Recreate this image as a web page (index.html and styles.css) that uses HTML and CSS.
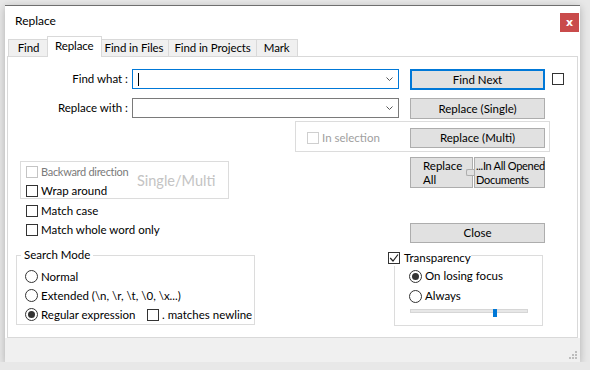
FILE: index.html
```html
<!DOCTYPE html>
<html lang="en">
<head>
    <meta charset="UTF-8">
    <meta name="viewport" content="width=device-width, initial-scale=1.0">
    <title>Replace</title>
    <link rel="stylesheet" href="styles.css">
</head>
<body>
<div class="window">
    <div class="titlebar">
        <span class="title">Replace</span>
        <button class="close-button">x</button>
    </div>

    <div class="tabs">
        <div class="tab">Find</div>
        <div class="tab active">Replace</div>
        <div class="tab">Find in Files</div>
        <div class="tab">Find in Projects</div>
        <div class="tab">Mark</div>
    </div>

    <div class="panel">
        <div class="field-row">
            <label class="field-label">Find what :</label>
            <div class="combo focused">
                <span class="caret"></span>
                <svg class="chevron" width="7" height="4" viewBox="0 0 7 4"><path d="M0.5 0.5 L3.5 3.5 L6.5 0.5" fill="none" stroke="#555" stroke-width="1"/></svg>
            </div>
            <button class="btn default">Find Next</button>
            <span class="box side-box"></span>
        </div>
        <div class="field-row">
            <label class="field-label">Replace with :</label>
            <div class="combo">
                <svg class="chevron" width="7" height="4" viewBox="0 0 7 4"><path d="M0.5 0.5 L3.5 3.5 L6.5 0.5" fill="none" stroke="#555" stroke-width="1"/></svg>
            </div>
            <button class="btn">Replace (Single)</button>
        </div>

        <div class="selection-group">
            <label class="opt disabled"><span class="box"></span>In selection</label>
            <button class="btn">Replace (Multi)</button>
        </div>

        <div class="lower">
            <div class="left-col">
                <div class="direction-group">
                    <div class="direction-opts">
                        <label class="opt dim"><span class="box"></span>Backward direction</label>
                        <label class="opt"><span class="box"></span>Wrap around</label>
                    </div>
                    <span class="mode-hint">Single/Multi</span>
                </div>
                <label class="opt match first"><span class="box"></span>Match case</label>
                <label class="opt match"><span class="box"></span>Match whole word only</label>

                <fieldset class="group search-mode">
                    <legend>Search Mode</legend>
                    <label class="opt"><span class="radio"></span>Normal</label>
                    <label class="opt"><span class="radio"></span>Extended (\n, \r, \t, \0, \x...)</label>
                    <div class="regex-row">
                        <label class="opt regex"><span class="radio checked"></span>Regular expression</label>
                        <label class="opt"><span class="box"></span>. matches newline</label>
                    </div>
                </fieldset>
            </div>

            <div class="right-col">
                <div class="replace-all">
                    <button class="btn multi">Replace<br>All</button>
                    <span class="link"></span>
                    <button class="btn multi wide">...In All Opened<br>Documents</button>
                </div>
                <button class="btn close-btn">Close</button>

                <fieldset class="group transparency">
                    <legend>
                        <span class="legend-inner">
                            <span class="box">
                                <svg width="10" height="10" viewBox="0 0 10 10"><path d="M1.2 5 L4 8 L9 1.5" fill="none" stroke="#222" stroke-width="1.2"/></svg>
                            </span>Transparency
                        </span>
                    </legend>
                    <label class="opt"><span class="radio checked"></span>On losing focus</label>
                    <label class="opt"><span class="radio"></span>Always</label>
                    <div class="slider">
                        <div class="track"></div>
                        <span class="thumb" style="left: 70%"></span>
                    </div>
                </fieldset>
            </div>
        </div>
    </div>

    <div class="footer">
        <svg width="9" height="8" viewBox="0 0 9 8">
            <rect x="6" y="0" width="2" height="2" fill="#bdbdbd"/>
            <rect x="3" y="3" width="2" height="2" fill="#bdbdbd"/>
            <rect x="6" y="3" width="2" height="2" fill="#bdbdbd"/>
            <rect x="0" y="6" width="2" height="2" fill="#bdbdbd"/>
            <rect x="3" y="6" width="2" height="2" fill="#bdbdbd"/>
            <rect x="6" y="6" width="2" height="2" fill="#bdbdbd"/>
        </svg>
    </div>
</div>
</body>
</html>
```

FILE: styles.css
```css
* {
    box-sizing: border-box;
}

body {
    margin: 0;
    background-color: #e8e8e8;
    font-family: "Segoe UI", Lato, "Noto Sans", sans-serif;
    font-size: 11.5px;
    line-height: 16px;
    color: #000;
}

.window {
    display: flex;
    flex-direction: column;
    width: 575px;
    height: 357px;
    margin: 5px 0 0 5px;
    background-color: #fff;
    border-top: 1px solid #6f6f6f;
    box-shadow: 0 2px 8px rgba(0, 0, 0, 0.25);
}

.titlebar {
    display: flex;
    align-items: flex-start;
    height: 30px;
    padding: 7px 1px 0 10px;
}

.title {
    font-size: 12px;
}

.close-button {
    margin-left: auto;
    width: 19px;
    height: 19px;
    padding: 0;
    border: none;
    background-color: #c94b4b;
    color: #fff;
    font: bold 11px/18px "DejaVu Sans", sans-serif;
}

.tabs {
    display: flex;
    align-items: flex-end;
    height: 20px;
    padding-left: 3px;
}

.tab {
    min-width: 41px;
    height: 17px;
    padding: 0 5px;
    border: 1px solid #d9d9d9;
    border-bottom: none;
    background-color: #f0f0f0;
    line-height: 15px;
    text-align: center;
    letter-spacing: -0.1px;
}

.tab + .tab {
    border-left: none;
}

.tab.active {
    position: relative;
    z-index: 1;
    height: 21px;
    margin: 0 -2px -1px;
    padding: 0 7px;
    border-left: 1px solid #d9d9d9;
    background-color: #fff;
    line-height: 18px;
}

.panel {
    height: 282px;
    margin: 0 2px;
    padding-top: 12px;
    border: 1px solid #d9d9d9;
    background-color: #fff;
}

.field-row {
    display: flex;
    align-items: flex-start;
}

.field-row + .field-row {
    margin-top: 8px;
}

.field-label {
    width: 120px;
    padding-top: 2px;
    text-align: right;
}

.combo {
    display: flex;
    align-items: center;
    width: 267px;
    height: 20px;
    margin-left: 4px;
    padding: 0 5px;
    border: 1px solid #7a7a7a;
    background-color: #fff;
}

.combo.focused {
    border-color: #0078d7;
}

.caret {
    width: 1px;
    height: 13px;
    background-color: #000;
}

.chevron {
    margin-left: auto;
}

.btn {
    height: 21px;
    padding: 0;
    border: 1px solid #adadad;
    background-color: #e1e1e1;
    font: inherit;
    color: #000;
    white-space: nowrap;
}

.field-row .btn {
    width: 135px;
    margin-left: 11px;
}

.btn.default {
    border-color: #0078d7;
    box-shadow: inset 0 0 0 1px #0078d7;
}

.side-box {
    width: 13px;
    height: 13px;
    margin: 4px 0 0 7px;
}

.selection-group {
    display: flex;
    align-items: center;
    width: 255px;
    height: 31px;
    margin: 2px 0 0 287px;
    padding: 3px 4px 0 11px;
    border: 1px solid #dcdcdc;
}

.selection-group .btn {
    width: 135px;
    height: 20px;
    margin-left: auto;
}

.opt {
    display: flex;
    align-items: center;
    height: 19px;
    white-space: nowrap;
}

.box {
    display: flex;
    align-items: center;
    justify-content: center;
    flex-shrink: 0;
    width: 12px;
    height: 12px;
    margin-right: 3px;
    border: 1px solid #333;
    background-color: #fff;
}

.radio {
    display: flex;
    align-items: center;
    justify-content: center;
    flex-shrink: 0;
    width: 13px;
    height: 13px;
    margin-right: 3px;
    border: 1px solid #333;
    border-radius: 50%;
    background-color: #fff;
}

.radio.checked::after {
    content: "";
    width: 7px;
    height: 7px;
    border-radius: 50%;
    background-color: #333;
}

.opt.disabled {
    color: #a0a0a0;
}

.opt.disabled .box {
    border-color: #cfcfcf;
}

.opt.dim {
    color: #7a7a7a;
    font-size: 11px;
    letter-spacing: -0.3px;
}

.opt.dim .box {
    border-color: #c4c4c4;
}

.lower {
    display: flex;
}

.left-col {
    width: 239px;
    margin-left: 8px;
}

.right-col {
    width: 157px;
    margin-left: 133px;
}

.direction-group {
    display: flex;
    width: 209px;
    height: 38px;
    margin: 9px 0 0 4px;
    padding-left: 5px;
    border: 1px solid #dcdcdc;
}

.direction-opts {
    width: 111px;
}

.mode-hint {
    align-self: center;
    padding-top: 2px;
    color: #c4c4c4;
    font-size: 14.5px;
    line-height: 20px;
}

.match {
    margin-left: 10px;
}

.match.first {
    margin-top: 2px;
}

.group {
    min-width: 0;
    margin: 0;
    border: 1px solid #dcdcdc;
}

.search-mode {
    margin-top: 8px;
    padding: 4px 0 0 8px;
}

.search-mode legend {
    margin-left: -4px;
    padding: 0 3px;
}

.regex-row {
    display: flex;
}

.regex {
    width: 122px;
}

.replace-all {
    position: relative;
    display: flex;
    gap: 1px;
    margin: 5px 0 0 22px;
}

.btn.multi {
    width: 63px;
    height: 31px;
    padding-left: 12px;
    text-align: left;
    line-height: 14px;
}

.btn.multi.wide {
    width: 71px;
    padding-left: 1px;
    font-size: 11px;
    letter-spacing: -0.3px;
}

.link {
    position: absolute;
    left: 56px;
    top: 12px;
    width: 8px;
    height: 7px;
    border: 1px solid #adadad;
    border-right: none;
    border-radius: 2px 0 0 2px;
    background-color: #e1e1e1;
}

.close-btn {
    display: block;
    width: 135px;
    height: 20px;
    margin: 35px 0 0 22px;
}

.transparency {
    width: 149px;
    margin: 1px 0 0 6px;
    padding: 0 0 8px 14px;
}

.transparency legend {
    height: 22px;
    margin-left: -21px;
    padding: 6px 0 0;
}

.legend-inner {
    display: flex;
    align-items: center;
    height: 16px;
}

.legend-inner .box {
    margin-right: 4px;
}

.transparency .opt {
    height: 20px;
}

.slider {
    position: relative;
    width: 118px;
    height: 8px;
    margin: 2px 0 0 1px;
}

.track {
    height: 4px;
    margin-top: 3px;
    border: 1px solid #d6d6d6;
    background-color: #e7e7e7;
}

.thumb {
    position: absolute;
    top: 0;
    width: 4px;
    height: 8px;
    background-color: #0078d7;
}

.footer {
    display: flex;
    flex: 1;
    align-items: flex-end;
    justify-content: flex-end;
    padding: 0 2px 3px 0;
    background-color: #f0f0f0;
}
```
